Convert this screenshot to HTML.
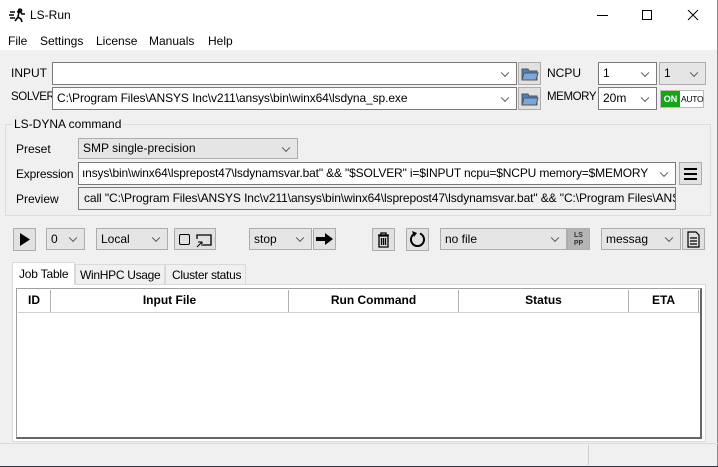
<!DOCTYPE html>
<html><head><meta charset="utf-8"><style>
*{box-sizing:border-box;margin:0;padding:0}
body{width:718px;height:467px;overflow:hidden;background:#f0f0f0;font-family:"Liberation Sans",sans-serif;font-size:12px;color:#000;position:relative}
.a{position:absolute;white-space:nowrap}
.tb{background:#fff;border:1px solid #7a7a7a}
.cb{background:#e5e5e5;border:1px solid #adadad}
.dd::after{content:"";position:absolute;right:8px;top:50%;width:5px;height:5px;border-right:1px solid #555;border-bottom:1px solid #555;transform:translateY(-70%) rotate(45deg)}
.btn{background:#e1e1e1;border:1px solid #adadad}
.t{line-height:20px;padding-left:4px}
.nar{letter-spacing:-0.4px}
</style></head><body>
<div class="a" style="left:0;top:0;width:718px;height:50px;background:#fff"></div>
<div class="a" style="right:0;top:0;width:1px;height:467px;background:#888"></div>
<svg class="a" style="left:9px;top:7px" width="18" height="16" viewBox="0 0 18 16"><path d="M1 5h5M0 8h5M1 11h5M11 2a1.5 1.5 0 1 0 .1 0M8 5l3-1 2 3 3 0M10 5l-1 5-3 4M9 10l3 2 1 3" stroke="#000" stroke-width="1.6" fill="none"/></svg>
<div class="a" style="left:30px;top:8px;font-size:12px">LS-Run</div>
<div class="a" style="left:597px;top:15px;width:11px;height:1px;background:#000"></div>
<div class="a" style="left:642px;top:10px;width:10px;height:10px;border:1px solid #000"></div>
<svg class="a" style="left:687px;top:9px" width="12" height="12"><path d="M1 1L11 11M11 1L1 11" stroke="#000" stroke-width="1"/></svg>
<div class="a" style="left:8px;top:34px">File</div>
<div class="a" style="left:40px;top:34px">Settings</div>
<div class="a" style="left:96px;top:34px">License</div>
<div class="a" style="left:149px;top:34px">Manuals</div>
<div class="a" style="left:208px;top:34px">Help</div>

<div class="a" style="left:11px;top:66px">INPUT</div>
<div class="a tb dd" style="left:52px;top:62px;width:465px;height:23px"></div>
<div class="a btn" style="left:518px;top:62px;width:23px;height:23px"><svg width="21" height="21"><path d="M3 6h6l1 2h8v9H3z" fill="#4a7fc0" stroke="#555"/><path d="M5 10h14l-2 7H3z" fill="#7aa7dd" stroke="#555"/></svg></div>
<div class="a" style="left:547px;top:66px">NCPU</div>
<div class="a tb dd t" style="left:598px;top:62px;width:59px;height:23px">1</div>
<div class="a cb dd t" style="left:659px;top:62px;width:47px;height:23px">1</div>

<div class="a nar" style="left:11px;top:91px;font-size:11.5px">SOLVER</div>
<div class="a tb dd t nar" style="left:52px;top:87px;width:465px;height:23px;line-height:21px;letter-spacing:-0.1px">C:\Program Files\ANSYS Inc\v211\ansys\bin\winx64\lsdyna_sp.exe</div>
<div class="a btn" style="left:518px;top:87px;width:23px;height:23px"><svg width="21" height="21"><path d="M3 6h6l1 2h8v9H3z" fill="#4a7fc0" stroke="#555"/><path d="M5 10h14l-2 7H3z" fill="#7aa7dd" stroke="#555"/></svg></div>
<div class="a nar" style="left:547px;top:91px;font-size:11.5px">MEMORY</div>
<div class="a tb dd t" style="left:598px;top:87px;width:59px;height:23px;line-height:21px">20m</div>
<div class="a" style="left:660px;top:90px;width:44px;height:18px;border:1px solid #bbb;background:#fff;font-size:9px;font-weight:bold"><span style="position:absolute;left:0;top:0;width:19px;height:16px;background:#1aa31a;color:#fff;line-height:16px;text-align:center">ON</span><span style="position:absolute;left:20px;top:0;line-height:16px;font-weight:normal;font-size:8.5px;letter-spacing:-0.3px">AUTO</span></div>

<div class="a" style="left:5px;top:124px;width:706px;height:92px;border:1px solid #dcdcdc"></div>
<div class="a" style="left:12px;top:117px;background:#f0f0f0;padding:0 2px">LS-DYNA command</div>
<div class="a" style="left:16px;top:142px">Preset</div>
<div class="a cb dd t" style="left:78px;top:138px;width:220px;height:21px;line-height:19px">SMP single-precision</div>
<div class="a nar" style="left:16px;top:167px;letter-spacing:-0.2px">Expression</div>
<div class="a tb dd" style="left:78px;top:162px;width:598px;height:23px;line-height:21px;overflow:hidden;padding-left:3px;letter-spacing:-0.15px"><div style="width:570px;overflow:hidden">ınsys\bin\winx64\lsprepost47\lsdynamsvar.bat" &amp;&amp; "$SOLVER" i=$INPUT ncpu=$NCPU memory=$MEMORY</div></div>
<div class="a btn" style="left:679px;top:162px;width:23px;height:23px"><div style="margin:5px 4px;height:2px;background:#000;box-shadow:0 5px #000,0 10px #000;width:13px"></div></div>
<div class="a" style="left:16px;top:192px">Preview</div>
<div class="a" style="left:78px;top:187px;width:598px;height:23px;border:1px solid #7a7a7a;line-height:21px;overflow:hidden;padding-left:5px;letter-spacing:-0.1px">call "C:\Program Files\ANSYS Inc\v211\ansys\bin\winx64\lsprepost47\lsdynamsvar.bat" &amp;&amp; "C:\Program Files\ANSYS</div>

<div class="a btn" style="left:13px;top:228px;width:23px;height:23px"><svg width="21" height="21"><path d="M6 4l10 6.5L6 17z"/></svg></div>
<div class="a cb dd t" style="left:46px;top:228px;width:39px;height:22px">0</div>
<div class="a cb dd t" style="left:96px;top:228px;width:72px;height:22px">Local</div>
<div class="a btn" style="left:174px;top:228px;width:42px;height:22px"><div class="a" style="left:4px;top:5px;width:11px;height:11px;border:1px solid #000;border-radius:2px"></div><svg class="a" style="left:20px;top:3px" width="18" height="16"><path d="M2 7V3h14v10H8" fill="none" stroke="#000" stroke-width="1.3"/><path d="M2 15l5-5M3 10h4v4" fill="none" stroke="#000"/></svg></div>
<div class="a cb dd t" style="left:249px;top:228px;width:63px;height:22px">stop</div>
<div class="a btn" style="left:313px;top:228px;width:23px;height:22px"><svg width="21" height="20"><path d="M2 8h9V4l8 6-8 6v-4H2z"/></svg></div>
<div class="a btn" style="left:372px;top:228px;width:23px;height:23px"><svg width="21" height="21"><path d="M5 6h11M8 6V4h5v2M6 7h9v11H6zM8.5 9v7M10.5 9v7M12.5 9v7" fill="none" stroke="#000" stroke-width="1.3"/></svg></div>
<div class="a btn" style="left:406px;top:228px;width:23px;height:23px"><svg width="21" height="21"><path d="M8 4.5A6.5 6.5 0 1 0 13 4.5" fill="none" stroke="#000" stroke-width="2"/><path d="M5 2l5 2-3 4z"/></svg></div>
<div class="a cb dd t" style="left:440px;top:228px;width:127px;height:22px">no file</div>
<div class="a btn" style="left:567px;top:228px;width:23px;height:22px;background:#b5b5b5"><div style="font-size:7px;font-weight:bold;color:#333;text-align:center;line-height:8px;padding-top:3px">LS<br>PP</div></div>
<div class="a cb dd t" style="left:601px;top:228px;width:80px;height:22px">messag</div>
<div class="a btn" style="left:682px;top:228px;width:23px;height:22px"><svg width="21" height="20"><path d="M5 3h8l3 3v12H5z M7 9h7M7 12h7M7 15h7" fill="none" stroke="#000" stroke-width="1.2"/></svg></div>

<div class="a" style="left:12px;top:284px;width:694px;height:158px;background:#fff;border:1px solid #d9d9d9"></div>
<div class="a" style="left:12px;top:262px;width:63px;height:23px;background:#fff;border:1px solid #d9d9d9;border-bottom:none;padding:4px 0 0 6px;letter-spacing:-0.2px">Job Table</div>
<div class="a" style="left:75px;top:264px;width:90px;height:20px;border:1px solid #d9d9d9;border-bottom:none;padding:3px 0 0 4px;letter-spacing:-0.3px">WinHPC Usage</div>
<div class="a" style="left:165px;top:264px;width:81px;height:20px;border:1px solid #d9d9d9;border-bottom:none;padding:3px 0 0 6px;letter-spacing:-0.3px">Cluster status</div>
<div class="a" style="left:16px;top:288px;width:686px;height:151px;border:1px solid #a0a0a0;border-right:2px solid #666;border-bottom:2px solid #666"></div>
<div class="a" style="left:18px;top:290px;width:682px;height:23px;border-bottom:1px solid #d0d0d0;font-weight:bold">
<div class="a" style="left:0;width:33px;height:22px;line-height:21px;text-align:center;border-right:1px solid #b0b0b0">ID</div>
<div class="a" style="left:33px;width:238px;height:22px;line-height:21px;text-align:center;border-right:1px solid #b0b0b0">Input File</div>
<div class="a" style="left:271px;width:170px;height:22px;line-height:21px;text-align:center;border-right:1px solid #b0b0b0">Run Command</div>
<div class="a" style="left:441px;width:170px;height:22px;line-height:21px;text-align:center;border-right:1px solid #b0b0b0">Status</div>
<div class="a" style="left:611px;width:70px;height:22px;line-height:21px;text-align:center;border-right:1px solid #b0b0b0">ETA</div>
</div>
<div class="a" style="left:0;top:443px;width:718px;height:1px;background:#dadada"></div>
<div class="a" style="left:588px;top:445px;width:1px;height:20px;background:#ccc"></div>
<div class="a" style="left:0;top:466px;width:718px;height:1px;background:#334"></div>
</body></html>
